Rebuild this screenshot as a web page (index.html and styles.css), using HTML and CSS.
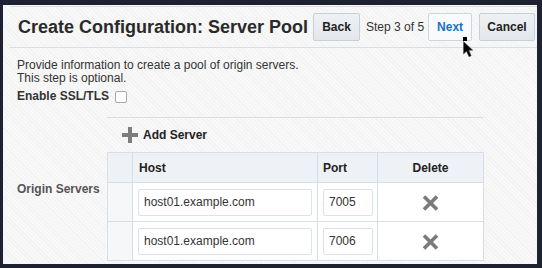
FILE: index.html
```html
<!DOCTYPE html>
<html>
<head>
<meta charset="utf-8">
<link rel="stylesheet" href="styles.css">
</head>
<body>
<div class="frame">
  <header class="bar">
    <h1 class="title">Create Configuration: Server Pool</h1>
    <button class="btn btn-back">Back</button>
    <span class="step">Step 3 of 5</span>
    <button class="btn btn-next">Next</button>
    <button class="btn btn-cancel">Cancel</button>
  </header>
  <div class="content">
    <p class="desc">Provide information to create a pool of origin servers.<br>This step is optional.</p>
    <div class="ssl">
      <span class="ssl-label">Enable SSL/TLS</span>
      <span class="checkbox"></span>
    </div>
    <div class="servers">
      <div class="servers-label">Origin Servers</div>
      <div class="servers-main">
        <div class="add-row">
          <svg class="plus" width="16" height="16" viewBox="0 0 16 16"><path d="M6 0h4v6h6v4h-6v6h-4v-6h-6v-4h6z" fill="#7d7d7d"/></svg>
          <span>Add Server</span>
        </div>
        <table class="grid">
          <colgroup><col class="c0"><col class="c1"><col class="c2"><col class="c3"></colgroup>
          <thead>
            <tr><th></th><th class="th-host">Host</th><th class="th-port">Port</th><th class="th-del">Delete</th></tr>
          </thead>
          <tbody>
            <tr>
              <td class="td-sel"></td>
              <td class="td-host"><input class="in in-host" value="host01.example.com"></td>
              <td class="td-port"><input class="in in-port" value="7005"></td>
              <td class="td-del"><svg width="17" height="16" viewBox="0 0 17 16"><path d="M2 1.5L15 14.5M15 1.5L2 14.5" stroke="#7b7b7b" stroke-width="3.6"/></svg></td>
            </tr>
            <tr>
              <td class="td-sel"></td>
              <td class="td-host"><input class="in in-host" value="host01.example.com"></td>
              <td class="td-port"><input class="in in-port" value="7006"></td>
              <td class="td-del"><svg width="17" height="16" viewBox="0 0 17 16"><path d="M2 1.5L15 14.5M15 1.5L2 14.5" stroke="#7b7b7b" stroke-width="3.6"/></svg></td>
            </tr>
          </tbody>
        </table>
      </div>
    </div>
  </div>
  <svg class="cursor" width="12" height="21" viewBox="0 0 12 21"><rect x="0" y="0" width="4" height="4" fill="#000"/><path d="M0.5 4.5L0.5 17L3.5 14.2L6 19.8L8.2 18.8L5.8 13.3L9.8 13.3Z" fill="#000" stroke="#555" stroke-width="0.6"/></svg>
</div>
</body>
</html>
```

FILE: styles.css
```css
html, body {
  margin: 0;
  padding: 0;
}
body {
  width: 542px;
  height: 268px;
  overflow: hidden;
  background: #1d2131;
  font-family: "Liberation Sans", Arial, sans-serif;
}
.frame {
  box-sizing: border-box;
  width: 542px;
  height: 268px;
  position: relative;
  overflow: hidden;
  border-style: solid;
  border-color: #1d2131;
  border-width: 5px 5px 4px 3px;
  background: repeating-linear-gradient(45deg, #f2f2f2 0px, #f2f2f2 1px, #f8f8f8 1px, #f8f8f8 3px);
}
.bar {
  display: flex;
  align-items: center;
  height: 40px;
  margin: 1px 0 0 7px;
  padding: 0 2px 0 8px;
  border-top: 1px solid #d6dee7;
  border-bottom: 1px solid #d6dee7;
}
.title {
  margin: 0;
  font-size: 18px;
  font-weight: bold;
  color: #2a2a2a;
  white-space: nowrap;
}
.btn {
  box-sizing: border-box;
  height: 28px;
  padding: 0;
  font-family: "Liberation Sans", Arial, sans-serif;
  font-size: 12px;
  font-weight: bold;
  color: #222;
  border: 1px solid #c6d0da;
  border-radius: 2px;
  background: linear-gradient(#eef1f4, #e3e7eb);
}
.btn-back {
  width: 47px;
  margin-left: 5px;
}
.step {
  margin-left: 6px;
  font-size: 12px;
  color: #333;
  white-space: nowrap;
}
.btn-next {
  width: 44px;
  margin-left: 4px;
  color: #1b70c6;
  background: #f8fafc;
  border-color: #cdd6df;
}
.btn-cancel {
  width: 56px;
  margin-left: 7px;
}
.content {
  padding-left: 14px;
}
.desc {
  margin: 11px 0 0;
  font-size: 12px;
  line-height: 13px;
  color: #333;
}
.ssl {
  display: flex;
  align-items: flex-start;
  margin-top: 3px;
  height: 16px;
}
.ssl-label {
  font-size: 12px;
  font-weight: bold;
  line-height: 16px;
  color: #333;
}
.checkbox {
  box-sizing: border-box;
  width: 12px;
  height: 12px;
  margin: 3px 0 0 6px;
  border: 1px solid #a8a8a8;
  border-radius: 2px;
  background: #fff;
}
.servers {
  display: flex;
  margin-top: 13px;
}
.servers-label {
  flex: none;
  width: 90px;
  margin-top: 65px;
  font-size: 12px;
  font-weight: bold;
  line-height: 14px;
  color: #555;
}
.servers-main {
  width: 376px;
  border-top: 1px solid #d6dee7;
}
.add-row {
  display: flex;
  align-items: center;
  height: 34px;
  padding-left: 15px;
  font-size: 12px;
  font-weight: bold;
  color: #222;
}
.plus {
  margin-right: 5px;
}
.grid {
  width: 376px;
  border-collapse: collapse;
  table-layout: fixed;
  background: #fff;
}
.c0 { width: 25px; }
.c1 { width: 185px; }
.c2 { width: 60px; }
.c3 { width: 106px; }
.grid th, .grid td {
  border: 1px solid #d6dee7;
  padding: 0;
}
.grid th {
  height: 29px;
  background: #eef1f5;
  font-size: 12px;
  font-weight: bold;
  color: #222;
  text-align: left;
}
.grid .th-host { padding-left: 6px; }
.grid .th-port { padding-left: 5px; }
.grid .th-del { text-align: center; }
.grid td {
  height: 38px;
}
.grid .td-sel {
  background: #f6f7f9;
}
.grid .td-host, .grid .td-port {
  padding-left: 5px;
}
.grid .td-del {
  text-align: center;
}
.td-del svg {
  display: inline-block;
  vertical-align: middle;
}
.in {
  box-sizing: border-box;
  display: block;
  height: 27px;
  padding: 0 5px;
  font-family: "Liberation Sans", Arial, sans-serif;
  font-size: 12px;
  color: #333;
  border: 1px solid #dce2e8;
  border-radius: 2px;
  background: #fff;
  outline: none;
}
.in-host { width: 174px; }
.in-port { width: 50px; }
.cursor {
  position: absolute;
  left: 460px;
  top: 32px;
}
```
